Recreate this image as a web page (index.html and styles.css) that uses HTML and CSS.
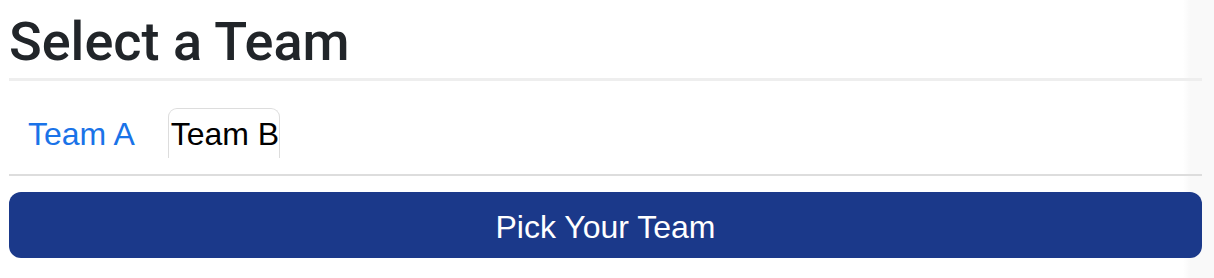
FILE: index.html
```html
<!DOCTYPE html>
<html lang="en">
<head>
    <meta charset="UTF-8">
    <meta name="viewport" content="width=device-width, initial-scale=1.0">
    <title>Select a Team</title>
    <link rel="stylesheet" href="styles.css">
</head>
<body>
    <h1 class="title">Select a Team</h1>

    <ul class="tabs">
        <li><a href="#team-a" class="tab-link">Team A</a></li>
        <li><a href="#team-b" class="tab-link active">Team B</a></li>
    </ul>

    <button class="pick-button" type="button">Pick Your Team</button>
</body>
</html>
```

FILE: styles.css
```css
* {
    margin: 0;
    padding: 0;
    box-sizing: border-box;
    font-family: 'Liberation Sans', Arial, sans-serif;
}

html {
    background: linear-gradient(to right, #ffffff 1183px, #f9f9f9 1190px);
}

body {
    padding: 0 12px 0 9px;
}

.title {
    margin-top: 9.5px;
    padding-bottom: 3.5px;
    border-bottom: 3px solid #eeeeee;
    font-family: Roboto, 'Liberation Sans', sans-serif;
    font-size: 54px;
    font-weight: 500;
    line-height: 1.2;
    color: #212529;
}

.tabs {
    list-style: none;
    display: flex;
    align-items: flex-end;
    gap: 14px;
    padding: 27px 0 16px;
    border-bottom: 2px solid #dddddd;
}

.tab-link {
    display: block;
    padding: 7px 19px 5px;
    font-size: 32px;
    color: #1a73e8;
    text-decoration: none;
}

.tab-link.active {
    padding: 7px 0 5px 2px;
    border: 1px solid #dddddd;
    border-bottom: none;
    border-radius: 9px 9px 0 0;
    color: #000000;
}

.pick-button {
    display: block;
    width: 100%;
    margin-top: 16px;
    padding: 17px 0 12px;
    border: none;
    border-radius: 12px;
    background-color: #1b398a;
    color: #ffffff;
    font-size: 32px;
    cursor: pointer;
}

.pick-button:hover {
    background-color: #163077;
}
```
